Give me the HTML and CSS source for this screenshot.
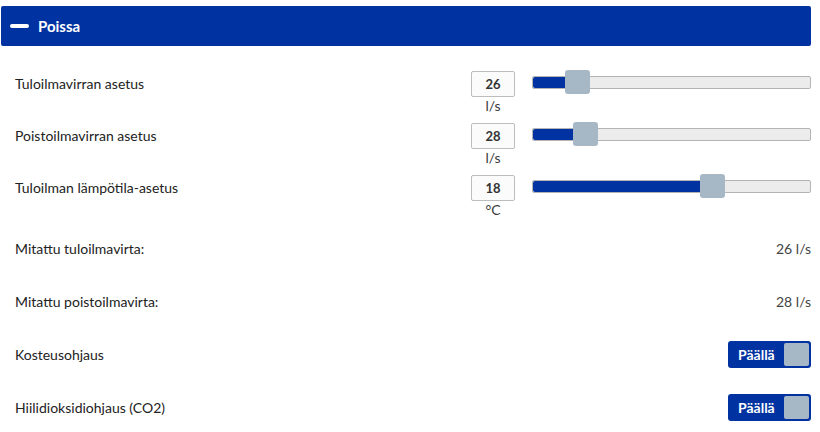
FILE: index.html
```html
<!DOCTYPE html>
<html lang="fi">
<head>
    <meta charset="UTF-8">
    <title>Ilmanvaihto</title>
    <link rel="stylesheet" href="styles.css">
</head>
<body>
    <div class="panel">
        <div class="panel-header">
            <span class="collapse-icon"></span>
            <span class="panel-title">Poissa</span>
        </div>

        <div class="panel-body">
            <div class="setting-row">
                <div class="label">Tuloilmavirran asetus</div>
                <div class="value-box">
                    <div class="num-input">26</div>
                    <div class="unit">l/s</div>
                </div>
                <div class="slider">
                    <div class="track">
                        <div class="fill" style="width: 33px"></div>
                        <div class="thumb"></div>
                    </div>
                </div>
            </div>

            <div class="setting-row">
                <div class="label">Poistoilmavirran asetus</div>
                <div class="value-box">
                    <div class="num-input">28</div>
                    <div class="unit">l/s</div>
                </div>
                <div class="slider">
                    <div class="track">
                        <div class="fill" style="width: 41px"></div>
                        <div class="thumb"></div>
                    </div>
                </div>
            </div>

            <div class="setting-row">
                <div class="label">Tuloilman lämpötila-asetus</div>
                <div class="value-box">
                    <div class="num-input">18</div>
                    <div class="unit">°C</div>
                </div>
                <div class="slider">
                    <div class="track">
                        <div class="fill" style="width: 168px"></div>
                        <div class="thumb"></div>
                    </div>
                </div>
            </div>

            <div class="info-row">
                <div class="label">Mitattu tuloilmavirta:</div>
                <div class="reading">26 l/s</div>
            </div>

            <div class="info-row">
                <div class="label">Mitattu poistoilmavirta:</div>
                <div class="reading">28 l/s</div>
            </div>

            <div class="info-row">
                <div class="label">Kosteusohjaus</div>
                <div class="toggle">
                    <span class="toggle-text">Päällä</span>
                    <span class="toggle-knob"></span>
                </div>
            </div>

            <div class="info-row">
                <div class="label">Hiilidioksidiohjaus (CO2)</div>
                <div class="toggle">
                    <span class="toggle-text">Päällä</span>
                    <span class="toggle-knob"></span>
                </div>
            </div>
        </div>
    </div>
</body>
</html>
```

FILE: styles.css
```css
body {
    margin: 0;
    background-color: #ffffff;
    font-family: Lato, "Liberation Sans", sans-serif;
    font-size: 14px;
    color: #222222;
}

.panel {
    width: 810px;
    margin: 6px 0 0 1px;
}

.panel-header {
    display: flex;
    align-items: center;
    height: 40px;
    background-color: #0033a1;
    border-radius: 2px;
    color: #ffffff;
}

.collapse-icon {
    width: 19px;
    height: 4px;
    margin-left: 9px;
    border-radius: 2px;
    background-color: #ffffff;
}

.panel-title {
    margin-left: 9px;
    font-weight: bold;
    font-size: 15px;
}

.panel-body {
    padding: 20px 0 0 14px;
}

/* slider rows */
.setting-row {
    display: flex;
    align-items: flex-start;
    height: 47px;
    padding-top: 5px;
}

.setting-row .label {
    flex: 1;
    line-height: 26px;
}

.value-box {
    width: 44px;
    text-align: center;
}

.num-input {
    height: 24px;
    line-height: 24px;
    border: 1px solid #bdbdbd;
    border-radius: 2px;
    background-color: #fbfbfb;
    font-weight: bold;
    font-size: 13px;
    color: #333333;
}

.unit {
    margin-top: 1px;
    font-size: 14px;
    line-height: 16px;
    color: #3a3a3a;
}

.slider {
    width: 279px;
    margin-left: 17px;
    padding-top: 5px;
}

.track {
    position: relative;
    height: 11px;
    border: 1px solid #b4b4b4;
    border-radius: 2px;
    background-color: #ececec;
}

.fill {
    height: 100%;
    background-color: #0033a1;
    border-radius: 2px 0 0 2px;
}

.thumb {
    position: absolute;
    top: -7px;
    width: 25px;
    height: 24px;
    margin-left: 32px;
    border-radius: 3px;
    background-color: #a6b8c6;
}

.setting-row:nth-child(1) .thumb { left: 0; }
.setting-row:nth-child(2) .thumb { left: 8px; }
.setting-row:nth-child(3) .thumb { left: 135px; }

/* read-only rows */
.info-row {
    display: flex;
    align-items: center;
    justify-content: space-between;
    height: 53px;
}

.reading {
    color: #444444;
}

.toggle {
    display: flex;
    align-items: center;
    justify-content: space-between;
    box-sizing: border-box;
    width: 83px;
    height: 27px;
    padding: 0 2px 0 10px;
    border-radius: 3px;
    background-color: #0033a1;
}

.toggle-text {
    font-weight: bold;
    font-size: 14px;
    color: #ffffff;
}

.toggle-knob {
    width: 25px;
    height: 23px;
    border-radius: 2px;
    background-color: #a6b8c6;
}
```
